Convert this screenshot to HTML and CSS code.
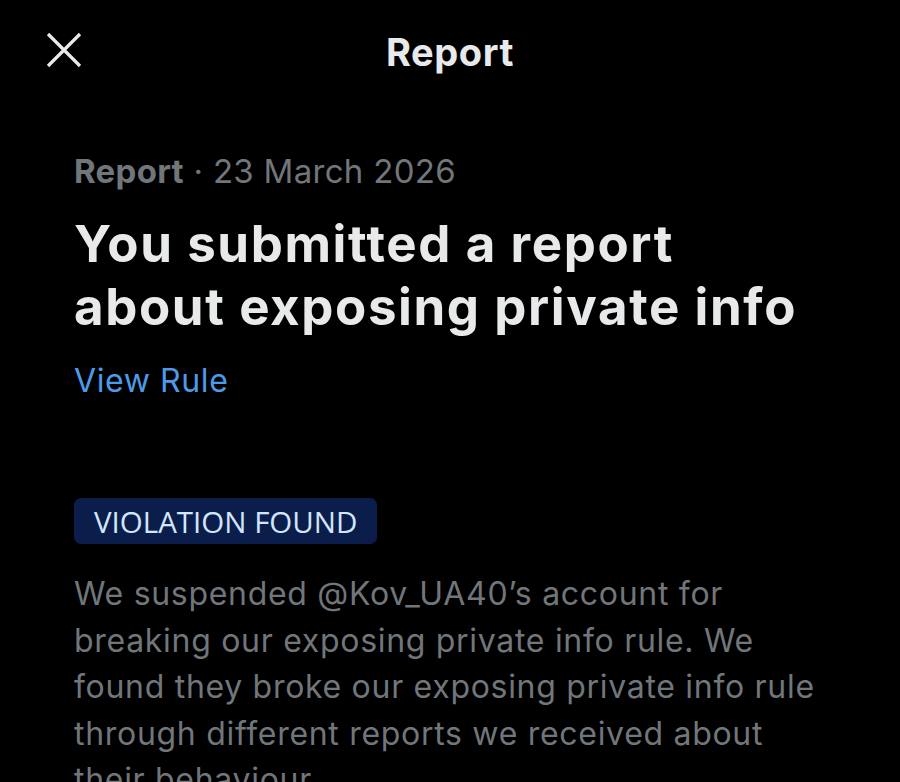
FILE: index.html
```html
<!DOCTYPE html>
<html lang="en">
<head>
<meta charset="utf-8">
<title>Report</title>
<link rel="stylesheet" href="styles.css">
</head>
<body>
<div class="screen">
  <header class="topbar">
    <button class="close" aria-label="Close">
      <svg width="36" height="36" viewBox="0 0 36 36"><path d="M2 2 L34 34 M34 2 L2 34" stroke="#e7e9ea" stroke-width="3.2" fill="none"/></svg>
    </button>
    <h1 class="topbar-title">Report</h1>
    <span class="spacer"></span>
  </header>
  <main class="content">
    <p class="meta"><span class="meta-strong">Report</span> · 23 March 2026</p>
    <h2 class="headline">You submitted a report about exposing private info</h2>
    <a class="rule-link" href="#">View Rule</a>
    <div class="badge-row"><span class="badge">VIOLATION FOUND</span></div>
    <p class="body-text">We suspended @Kov_UA40’s account for breaking our exposing private info rule. We found they broke our exposing private info rule through different reports we received about their behaviour.</p>
  </main>
</div>
</body>
</html>
```
FILE: styles.css
```css
html, body {
  margin: 0;
  padding: 0;
  background: #000;
}
body {
  font-family: Inter, "Noto Sans", sans-serif;
  color: #e7e9ea;
  overflow: hidden;
}
.screen {
  width: 900px;
  height: 782px;
  overflow: hidden;
}
.topbar {
  display: grid;
  grid-template-columns: 130px 1fr 130px;
  align-items: center;
  height: 100px;
}
.close {
  background: none;
  border: 0;
  padding: 0 0 0 46px;
  display: flex;
  align-items: center;
  height: 36px;
}
.topbar-title {
  margin: 4px 0 0 0;
  text-align: center;
  font-size: 38px;
  line-height: 44px;
  letter-spacing: 0.6px;
  font-weight: 700;
  color: #e7e9ea;
}
.content {
  padding: 51px 64px 0 74px;
}
.meta {
  margin: 0;
  font-size: 33px;
  line-height: 40px;
  letter-spacing: 0.3px;
  color: #71767b;
}
.meta-strong {
  font-weight: 700;
}
.headline {
  margin: 21px 0 0 0;
  max-width: 740px;
  font-size: 51px;
  line-height: 63px;
  letter-spacing: 1.6px;
  font-weight: 700;
  color: #e7e9ea;
}
.rule-link {
  display: inline-block;
  margin-top: 23px;
  font-size: 32px;
  line-height: 40px;
  letter-spacing: 0.6px;
  color: #4c9be8;
  text-decoration: none;
}
.badge-row {
  margin-top: 97px;
  display: flex;
}
.badge {
  display: inline-flex;
  align-items: center;
  height: 46px;
  padding: 0 20px;
  background: #0b1e4b;
  border-radius: 7px;
  color: #d3e6fb;
  font-family: "Open Sans", sans-serif;
  font-size: 29.5px;
}
.body-text {
  margin: 27px 0 0 0;
  max-width: 752px;
  font-size: 32px;
  line-height: 46.5px;
  letter-spacing: 0.7px;
  color: #71767b;
}
```
